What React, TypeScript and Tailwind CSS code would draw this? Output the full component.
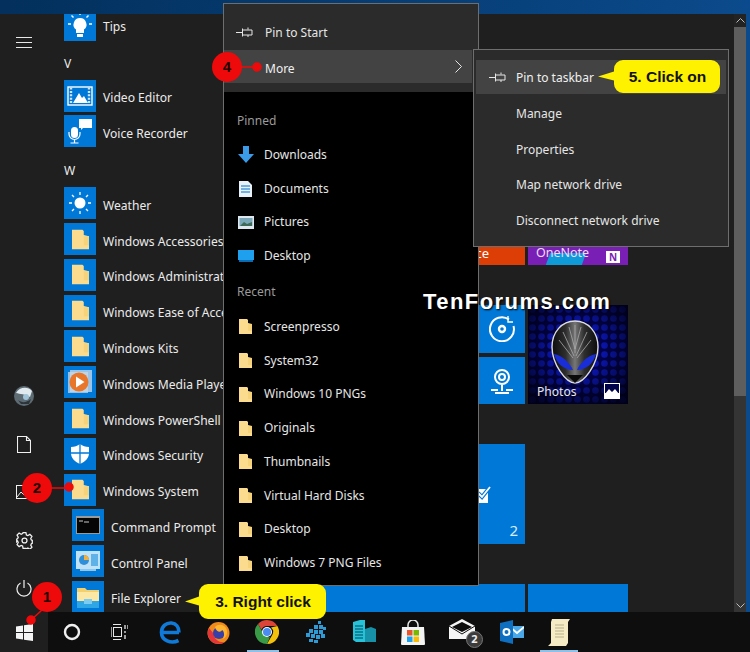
import React from "react";

const font = "font-['Noto_Sans',sans-serif]";

function Pin({ x = 0 }: { x?: number }) {
  return (
    <svg width="17" height="11" viewBox="0 0 17 11" fill="none" stroke="#e6e6e6" strokeWidth="1" style={{ marginLeft: x }}>
      <path d="M0 5.500h6M6.500 1.500v8M6.500 3h9.500v5H6.500M12 .5v2M12 8v2" />
    </svg>
  );
}

function Folder({ w = 13, h = 17 }: { w?: number; h?: number }) {
  return (
    <svg width={w} height={h} viewBox="0 0 13 17">
      <path d="M0 1h8l1 1v3l4 1v10H0z" fill="#fbdc8e" />
      <path d="M9 6l4 0v7H9z" fill="#f6d27a" />
    </svg>
  );
}

const VideoIcon = () => (
  <svg width="26" height="20" viewBox="0 0 26 20">
    <rect x="1" y="1" width="24" height="18" fill="none" stroke="#fff" strokeWidth="1.400" />
    <path d="M4 1.500v17M22 1.500v17" stroke="#cfe6f8" strokeWidth="2.400" strokeDasharray="2 1.400" />
    <path d="M6 17l6-10 3 5 2-2 4 7z" fill="#fff" />
  </svg>
);
const VoiceIcon = () => (
  <svg width="24" height="26" viewBox="0 0 24 26" fill="none">
    <path d="M11 1h13v9h-9l-2 2v-2h-2z" fill="#fff" />
    <rect x="3" y="9" width="7" height="11" rx="3.500" fill="#fff" />
    <path d="M1 14v2a5.500 5.500 0 0 0 11 0v-2M6.500 21.500v3M2.500 25h8" stroke="#fff" strokeWidth="1.200" />
  </svg>
);
const TipsIcon = () => (
  <svg width="24" height="26" viewBox="0 0 24 26" fill="none">
    <path d="M12 6a6.500 6.500 0 0 0-4 11.600V21h8v-3.400A6.500 6.500 0 0 0 12 6z" fill="#fff" />
    <rect x="9" y="22" width="6" height="3" fill="#fff" />
    <path d="M12 0v3M3.500 3.500l2 2M20.500 3.500l-2 2M0 12h3M21 12h3" stroke="#fff" strokeWidth="1.400" />
  </svg>
);
const SunIcon = () => (
  <svg width="22" height="22" viewBox="0 0 22 22">
    <circle cx="11" cy="11" r="5.500" fill="#fff" />
    <path d="M11 0v3M11 19v3M0 11h3M19 11h3M3 3l2 2M17 17l2 2M19 3l-2 2M5 17l-2 2" stroke="#fff" strokeWidth="1.300" />
  </svg>
);
const MediaIcon = () => (
  <svg width="26" height="26" viewBox="0 0 26 26">
    <rect x="3" y="1" width="22" height="22" fill="#9cc4e6" />
    <rect x="1" y="3" width="20" height="21" fill="#c8d8e6" opacity=".75" />
    <circle cx="12" cy="13" r="9.500" fill="#e8762b" />
    <path d="M9 7.500l8.500 5.500-8.500 5.500z" fill="#fff" />
  </svg>
);
const ShieldIcon = () => (
  <svg width="18" height="20" viewBox="0 0 18 20">
    <path d="M9 0c2.500 2 5.500 3 9 3v6c0 5-3.500 8.500-9 11C3.500 17.500 0 14 0 9V3c3.500 0 6.500-1 9-3z" fill="#fff" />
    <path d="M9 0v20M0 9h18" stroke="#0078d7" strokeWidth="1.300" />
  </svg>
);
const CmdIcon = () => (
  <svg width="24" height="18" viewBox="0 0 24 18">
    <rect width="24" height="18" fill="#9a9a9a" />
    <rect x="1" y="2" width="22" height="15" fill="#050505" />
    <path d="M3 5h4M8 6h5" stroke="#c9c9c9" strokeWidth="1" />
  </svg>
);
const PanelIcon = () => (
  <svg width="24" height="20" viewBox="0 0 24 20">
    <rect width="24" height="18" fill="#bfe2f6" />
    <circle cx="8" cy="9" r="5" fill="#2f8fd8" />
    <path d="M8 9V4a5 5 0 0 1 5 5z" fill="#f3b03d" />
    <rect x="15" y="3" width="7" height="12" fill="#5fb2e8" />
    <rect x="4" y="18" width="16" height="2" fill="#8fc6e8" />
  </svg>
);
const ExplorerIcon = () => (
  <svg width="24" height="22" viewBox="0 0 24 22">
    <path d="M1 2h8l2 2h12v18H1z" fill="#f4cf6d" />
    <path d="M1 6h22v16H1z" fill="#fde7a5" />
    <rect x="1" y="15" width="22" height="7" fill="#2ea6e6" />
    <rect x="8" y="13" width="8" height="5" fill="#7ccbf0" />
  </svg>
);
const FolderTile = () => <Folder w={17} h={23} />;

type Row = { label: string; icon: React.ReactNode; sub?: boolean };
const top: Row[] = [{ label: "Tips", icon: <TipsIcon /> }];
const v: Row[] = [
  { label: "Video Editor", icon: <VideoIcon /> },
  { label: "Voice Recorder", icon: <VoiceIcon /> },
];
const w: Row[] = [
  { label: "Weather", icon: <SunIcon /> },
  { label: "Windows Accessories", icon: <FolderTile /> },
  { label: "Windows Administrative Tools", icon: <FolderTile /> },
  { label: "Windows Ease of Access", icon: <FolderTile /> },
  { label: "Windows Kits", icon: <FolderTile /> },
  { label: "Windows Media Player", icon: <MediaIcon /> },
  { label: "Windows PowerShell", icon: <FolderTile /> },
  { label: "Windows Security", icon: <ShieldIcon /> },
  { label: "Windows System", icon: <FolderTile /> },
  { label: "Command Prompt", icon: <CmdIcon />, sub: true },
  { label: "Control Panel", icon: <PanelIcon />, sub: true },
  { label: "File Explorer", icon: <ExplorerIcon />, sub: true },
];

function AppRow({ r }: { r: Row }) {
  return (
    <div className={`h-[35.8px] shrink-0 flex items-center gap-[7px] whitespace-nowrap ${r.sub ? "pl-[8px]" : ""}`}>
      <div className="w-[32px] h-[32px] shrink-0 bg-[#0078d7] flex items-center justify-center">{r.icon}</div>
      <span className="pt-[5px] text-[12.1px] text-[#ececec]">{r.label}</span>
    </div>
  );
}

const Rail = () => (
  <div className="w-[48px] shrink-0 flex flex-col justify-between">
    <div className="h-[48px] mt-[4px] flex items-center justify-center">
      <svg width="16" height="11" viewBox="0 0 16 11" stroke="#e8e8e8" strokeWidth="1">
        <path d="M0 .5h16M0 5.500h16M0 10.500h16" />
      </svg>
    </div>
    <div className="flex flex-col">
      <div className="h-[48px] flex items-center justify-center">
        <svg width="22" height="22" viewBox="0 0 22 22">
          <circle cx="11" cy="11" r="10" fill="#5d6b73" />
          <path d="M3 8c3-6 12-7 16-2l-2 6c-5-3-10-3-14-4z" fill="#dfe9ee" />
          <path d="M5 15c4 3 8 3 13-1l-2 5H8z" fill="#2c343a" />
          <circle cx="13" cy="12" r="3" fill="#9fc2d6" />
        </svg>
      </div>
      <div className="h-[48px] flex items-center justify-center">
        <svg width="14" height="17" viewBox="0 0 14 17" fill="none" stroke="#f0f0f0" strokeWidth="1.100">
          <path d="M.5.500h9l4 4v12H.5zM9.500.500v4h4" />
        </svg>
      </div>
      <div className="h-[48px] flex items-center justify-center">
        <svg width="16" height="14" viewBox="0 0 16 14" fill="none" stroke="#f0f0f0" strokeWidth="1">
          <rect x=".5" y=".5" width="15" height="13" />
          <path d="M1 12l4-5 3 3 2-2 5 4" />
        </svg>
      </div>
      <div className="h-[48px] flex items-center justify-center">
        <svg width="17" height="17" viewBox="0 0 24 24" fill="none" stroke="#f0f0f0" strokeWidth="1.800">
          <circle cx="12" cy="12" r="3.500" />
          <path d="M10 1h4l.7 3.200 2 .9L19.600 3.400l2.900 2.900-1.700 2.900.9 2 1.300.7v4l-1.300.7-.9 2 1.700 2.900-2.900 2.900-2.900-1.700-2 .9L14 23h-4l-.7-3.200-2-.9-2.900 1.700-2.900-2.900 1.700-2.900-.9-2L1 14v-4l1.300-.7.9-2L1.500 4.400l2.900-2.900 2.900 1.700 2-.9z" />
        </svg>
      </div>
      <div className="h-[48px] flex items-center justify-center">
        <svg width="16" height="17" viewBox="0 0 16 17" fill="none" stroke="#f0f0f0" strokeWidth="1.200">
          <path d="M8 0v8M4.500 3A7 7 0 1 0 11.500 3" />
        </svg>
      </div>
    </div>
  </div>
);

const AppList = () => (
  <div className={`w-[175px] shrink-0 pl-[16px] -mt-[7px] flex flex-col ${font}`}>
    {top.map((r) => <AppRow key={r.label} r={r} />)}
    <div className="h-[35px] shrink-0 pt-[12px] text-[12.1px] text-[#ececec]">V</div>
    {v.map((r) => <AppRow key={r.label} r={r} />)}
    <div className="h-[36px] shrink-0 pt-[13px] text-[12.1px] text-[#ececec]">W</div>
    {w.map((r) => <AppRow key={r.label} r={r} />)}
  </div>
);

const Photos = () => (
  <div className="w-[100px] h-[99px] relative overflow-hidden">
    <svg width="100" height="99" viewBox="0 0 100 99" className="block">
      <defs>
        <pattern id="dots" width="9" height="9" patternUnits="userSpaceOnUse">
          <circle cx="4.500" cy="4.500" r="3.300" fill="#0a14a8" />
        </pattern>
        <radialGradient id="vig" cx=".5" cy=".45" r=".65">
          <stop offset=".4" stopColor="#000" stopOpacity="0" />
          <stop offset="1" stopColor="#000010" stopOpacity=".85" />
        </radialGradient>
        <linearGradient id="head" x1="0" y1="0" x2="1" y2="0">
          <stop offset="0" stopColor="#0c0c0c" />
          <stop offset=".3" stopColor="#2e2e2e" />
          <stop offset=".5" stopColor="#777" />
          <stop offset=".7" stopColor="#2e2e2e" />
          <stop offset="1" stopColor="#0c0c0c" />
        </linearGradient>
      </defs>
      <rect width="100" height="99" fill="#02024a" />
      <rect width="100" height="99" fill="url(#dots)" />
      <rect width="100" height="99" fill="url(#vig)" />
      <path d="M47 16c13 0 23 11 23 26 0 17-14 36-23 36S24 59 24 42c0-15 10-26 23-26z" fill="url(#head)" stroke="#dcdcdc" strokeWidth="1.400" />
      <path d="M47 20v28M41 22l6 22 6-22M35 27l11 24M59 27L48 51M31 35l14 18M63 35L49 53" fill="none" stroke="#a8a8a8" strokeWidth=".8" />
      <path d="M26 49c8 1 16 9 19 16-9 0-17-7-19-16zM68 49c-8 1-16 9-19 16 9 0 17-7 19-16z" fill="#1a2ed8" />
      <path d="M39 70h16l-8 8z" fill="#0a0a0a" />
    </svg>
    <span className={`absolute left-[9px] bottom-[3px] text-[12.1px] text-[#e8e8e8] ${font}`}>Photos</span>
    <svg width="16" height="16" viewBox="0 0 16 16" className="absolute right-[8px] bottom-[5px]">
      <rect width="16" height="16" fill="#fff" />
      <rect x="1" y="1" width="14" height="9" fill="#02024a" />
      <path d="M1 11l4-5 3 3 3-3 4 5v4H1z" fill="#fff" />
    </svg>
  </div>
);

const Tiles = () => (
  <div className="flex-1 overflow-hidden pl-[2px] pt-[151px] grid grid-cols-[300px_100px] gap-x-[3px] content-start">
    <div className="h-[100px] flex justify-end">
      <div className="w-[100px] h-[100px] bg-[#dc3e05] flex items-end justify-end pr-[36px] pb-[2px]">
        <span className={`text-[13px] text-white ${font}`}>Office</span>
      </div>
    </div>
    <div className="w-[100px] h-[100px] bg-[#7a1fb5] relative overflow-hidden">
      <div className="absolute left-[20px] bottom-0 w-[36px] h-[12px] bg-[#0f9bd8] -skew-x-[20deg]" />
      <span className={`absolute left-[8px] bottom-[2px] text-[12.5px] text-[#ecdcff] ${font}`}>OneNote</span>
      <span className={`absolute right-[8px] bottom-[2px] w-[14px] h-[12px] bg-white text-[#7a1fb5] text-[10px] font-bold leading-[12px] text-center ${font}`}>N</span>
    </div>

    <div className="mt-[40px] h-[99px] flex flex-col items-end justify-between">
      <div className="w-[47px] h-[48px] bg-[#0078d7] flex items-center justify-center">
        <svg width="26" height="26" viewBox="0 0 26 26" fill="none" stroke="#fff" strokeWidth="2">
          <path d="M20 3.500A12 12 0 1 0 24.500 10" />
          <circle cx="13" cy="13" r="3" strokeWidth="2.400" />
          <path d="M19 0v6h5" strokeWidth="1.400" />
        </svg>
      </div>
      <div className="w-[47px] h-[47px] bg-[#0078d7] flex items-center justify-center">
        <svg width="22" height="26" viewBox="0 0 22 26" fill="none" stroke="#fff" strokeWidth="2">
          <circle cx="11" cy="9" r="7" />
          <circle cx="11" cy="9" r="3" />
          <path d="M0 22h7M15 22h7M4 25h14M11 17v6" />
        </svg>
      </div>
    </div>
    <div className="mt-[40px]"><Photos /></div>

    <div className="mt-[40px] h-[100px] flex justify-end">
      <div className="w-[100px] h-[100px] bg-[#0078d7] relative">
        <svg width="16" height="18" viewBox="0 0 16 18" className="absolute left-[50px] top-[41px]">
          <rect y="4" width="13" height="14" fill="#fff" />
          <path d="M3 8l4 4 8-10" fill="none" stroke="#0078d7" strokeWidth="4" />
          <path d="M3 8l4 4 8-10" fill="none" stroke="#fff" strokeWidth="1.800" />
        </svg>
        <span className={`absolute right-[7px] bottom-[3px] text-[15px] text-[#d8ecfb] ${font}`}>2</span>
      </div>
    </div>
    <div className="mt-[40px]" />

    <div className="mt-[40px] h-[60px] bg-[#0078d7]" />
    <div className="mt-[40px] h-[60px] bg-[#0078d7]" />
  </div>
);

const Scrollbar = () => (
  <div className="w-[12px] shrink-0 bg-[#343434] flex flex-col">
    <div className="h-[13px] bg-[#232323] flex items-center justify-center">
      <svg width="9" height="5" viewBox="0 0 9 5" fill="none" stroke="#bdbdbd"><path d="M.5 4.500l4-4 4 4" /></svg>
    </div>
    <div className="h-[369px] bg-[#5e5e5e]" />
    <div className="flex-1" />
    <div className="h-[13px] flex items-center justify-center">
      <svg width="9" height="5" viewBox="0 0 9 5" fill="none" stroke="#bdbdbd"><path d="M.5.500l4 4 4-4" /></svg>
    </div>
  </div>
);

const blueArrow = (
  <svg width="16" height="17" viewBox="0 0 16 17"><path d="M5 0h6v8h5l-8 9-8-9h5z" fill="#3b9be8" /></svg>
);
const docIcon = (
  <svg width="13" height="16" viewBox="0 0 13 16">
    <path d="M0 0h9l4 4v12H0z" fill="#e8f1f8" />
    <path d="M2 5h9M2 8h9M2 11h9" stroke="#4a9bd8" strokeWidth="1.400" />
  </svg>
);
const picIcon = (
  <svg width="16" height="13" viewBox="0 0 16 13">
    <rect width="16" height="13" fill="#dfe8ee" />
    <rect x="1.500" y="2" width="13" height="8" fill="#7aa8b8" />
    <path d="M2 10l4-4 3 2 5-2v4z" fill="#3f6a58" />
  </svg>
);
const deskIcon = (
  <svg width="16" height="12" viewBox="0 0 16 12">
    <rect width="16" height="10" fill="#1ea0ee" />
    <rect x="1" y="10" width="14" height="2" fill="#0c6bb0" />
  </svg>
);

function MenuRow({ icon, label }: { icon: React.ReactNode; label: string }) {
  return (
    <div className="h-[33.75px] flex items-center">
      <div className="w-[40px] shrink-0 flex justify-center pl-[3px]">{icon}</div>
      <span className="text-[12px] text-[#e6e6e6]">{label}</span>
    </div>
  );
}

const ContextMenu = () => (
  <div className={`absolute left-[223px] top-[3px] w-[256px] h-[583px] border border-[#6e6e6e] bg-black flex flex-col ${font}`}>
    <div className="h-[88px] shrink-0 bg-[#2b2b2b] pt-[11px]">
      <div className="h-[35px] flex items-center text-[12px] text-[#e6e6e6]">
        <div className="w-[41px] flex justify-center"><Pin /></div>
        <span>Pin to Start</span>
      </div>
      <div className="h-[33px] flex items-center justify-between bg-[#434343] pl-[41px] pr-[9px] mr-[6px] text-[12px] text-[#f0f0f0]">
        <span className="pt-[5px]">More</span>
        <svg width="8" height="13" viewBox="0 0 8 13" fill="none" stroke="#e6e6e6"><path d="M.5.500l6 6-6 6" /></svg>
      </div>
    </div>
    <div className="h-[46px] shrink-0 flex items-end pb-[8px] pl-[13px] text-[12px] text-[#9b9b9b]">Pinned</div>
    <MenuRow icon={blueArrow} label="Downloads" />
    <MenuRow icon={docIcon} label="Documents" />
    <MenuRow icon={picIcon} label="Pictures" />
    <MenuRow icon={deskIcon} label="Desktop" />
    <div className="h-[37px] shrink-0 flex items-end pb-[9px] pl-[13px] text-[12px] text-[#9b9b9b]">Recent</div>
    {["Screenpresso", "System32", "Windows 10 PNGs", "Originals", "Thumbnails", "Virtual Hard Disks", "Desktop", "Windows 7 PNG Files"].map((l, i) => (
      <MenuRow key={i} icon={<Folder />} label={l} />
    ))}
  </div>
);

const SubMenu = () => (
  <div className={`absolute left-[473px] top-[49px] w-[256px] h-[198px] border border-[#6e6e6e] bg-[#2b2b2b] pt-[10px] flex flex-col ${font}`}>
    <div className="h-[34px] mx-[2px] bg-[#434343] flex items-center pl-[13px] text-[12px] text-[#f0f0f0]">
      <Pin /><span className="ml-[10px] pt-[2px]">Pin to taskbar</span>
    </div>
    <div className="mt-[2px] flex flex-col">
      {["Manage", "Properties", "Map network drive", "Disconnect network drive"].map((l) => (
        <div key={l} className="h-[35.75px] flex items-center pl-[42px] text-[12px] text-[#e6e6e6]">{l}</div>
      ))}
    </div>
  </div>
);

function Callout({ left, top, w, h, tail, label }: { left: number; top: number; w: number; h: number; tail: number; label: string }) {
  const b = tail;
  const m = h / 2;
  return (
    <div className="absolute" style={{ left, top, width: w, height: h }}>
      <svg width={w} height={h} viewBox={`0 0 ${w} ${h}`} className="absolute inset-0">
        <path
          d={`M${b + 8} 0H${w - 9}a9 9 0 0 1 9 9V${h - 9}a9 9 0 0 1-9 9H${b + 8}a9 9 0 0 1-9-9V${m + 4}L0 ${m}l${b - 1} -5V9a9 9 0 0 1 9-9z`}
          fill="#fef200"
        />
      </svg>
      <div className="absolute inset-y-0 right-0 flex items-center justify-center text-[15.5px] font-bold text-[#111] font-['Liberation_Sans',sans-serif]" style={{ left: b }}>
        {label}
      </div>
    </div>
  );
}

function Badge({ left, top, n }: { left: number; top: number; n: string }) {
  return (
    <div
      className="absolute w-[30px] h-[30px] rounded-full bg-[#ee0a0a] flex items-center justify-center text-[15px] font-bold text-[#200] font-['Liberation_Sans',sans-serif]"
      style={{ left, top }}
    >
      {n}
    </div>
  );
}

const Taskbar = () => (
  <div className="h-[40px] shrink-0 bg-[#0e0e0e] flex">
    <div className="w-[48px] shrink-0 bg-[#1f1f1f] flex items-center justify-center">
      <svg width="17" height="17" viewBox="0 0 17 17" fill="#f4f4f4">
        <path d="M0 2.500l7-1v6.500H0zM8 1.300L17 0v8H8zM0 9h7v6.500l-7-1zM8 9h9v8l-9-1.300z" />
      </svg>
    </div>
    <div className="w-[47px] flex items-center justify-center">
      <svg width="18" height="18" viewBox="0 0 18 18" fill="none"><circle cx="9" cy="9" r="7" stroke="#f0f0f0" strokeWidth="2.400" /></svg>
    </div>
    <div className="w-[48px] flex items-center justify-center">
      <svg width="17" height="16" viewBox="0 0 17 16" fill="none" stroke="#e8e8e8">
        <path d="M2 .5h8M2 15.500h8" /><rect x="2.500" y="3.500" width="8" height="9" /><path d="M0 3v10M14 1v4M17 1v4M14 7v2M14 11v4" strokeWidth="1.300" />
      </svg>
    </div>
    <div className="w-[54px] flex items-center justify-center">
      <svg width="22" height="23" viewBox="0 0 22 23" fill="none" stroke="#0f7ad8" strokeWidth="3.600">
        <path d="M20 11.500H4M19.500 19.500C12 23 2.500 19.500 2.500 11.500 2.500 5 7.500 1.500 12.500 2c4.500.5 7.500 4 7.500 9.500" />
      </svg>
    </div>
    <div className="w-[42px] flex items-center justify-center">
      <svg width="23" height="23" viewBox="0 0 23 23">
        <circle cx="11.500" cy="12" r="11" fill="#f08a1d" />
        <path d="M2 7a11 11 0 0 0 5 15c4 1.500 8 1 11-1-5 1-11-2-11-8z" fill="#e3353a" />
        <circle cx="12" cy="12" r="6" fill="#3a3fa8" />
        <path d="M8 6c3-3 8-3 11 1 2 4 1 9-3 11 2-4 1-8-1-9-1 3-6 2-7-3z" fill="#ffb62e" />
      </svg>
    </div>
    <div className="w-[56px] flex flex-col items-center relative">
      <div className="flex-1 flex items-center justify-center">
        <svg width="24" height="24" viewBox="0 0 24 24">
          <path d="M12 0a12 12 0 0 1 10.400 6H12a6 6 0 0 0-5.600 3.800L3 4a12 12 0 0 1 9-4z" fill="#db4437" />
          <path d="M22.400 6A12 12 0 0 1 12 24l5.200-9A6 6 0 0 0 16 7.500z" fill="#f4c20d" />
          <path d="M12 24A12 12 0 0 1 3 4l5 9a6 6 0 0 0 7 4z" fill="#3a9b47" />
          <circle cx="12" cy="12" r="5" fill="#fff" /><circle cx="12" cy="12" r="4" fill="#4a8cf0" />
        </svg>
      </div>
      <div className="absolute bottom-0 left-[8px] w-[32px] h-[2px] bg-[#8fc0e8]" />
    </div>
    <div className="w-[42px] flex items-center justify-center">
      <svg width="20" height="23" viewBox="0 0 20 23" fill="#2e9bd6">
        <rect x="12" y="0" width="3" height="3" /><rect x="8" y="4" width="4" height="4" /><rect x="13" y="4" width="4" height="4" />
        <rect x="3" y="8" width="4" height="4" /><rect x="8" y="9" width="4" height="4" /><rect x="13" y="9" width="4" height="4" /><rect x="17" y="6" width="3" height="3" />
        <rect x="0" y="12" width="4" height="4" /><rect x="5" y="13" width="4" height="4" /><rect x="10" y="14" width="4" height="4" /><rect x="15" y="13" width="4" height="4" />
        <rect x="3" y="18" width="4" height="3" /><rect x="8" y="19" width="4" height="3" />
      </svg>
    </div>
    <div className="w-[54px] flex items-center justify-center">
      <svg width="24" height="24" viewBox="0 0 24 24">
        <path d="M1 2l7-2h5v22H4L1 20z" fill="#27c2d8" />
        <path d="M13 9l6-2 5 2v13H13z" fill="#1691a8" />
        <path d="M3 6h8M3 9h8M3 12h8M3 15h8M3 18h8" stroke="#0e7186" strokeWidth="1.300" />
      </svg>
    </div>
    <div className="w-[44px] flex items-center justify-center">
      <svg width="24" height="25" viewBox="0 0 24 25">
        <path d="M7 8V5a5 5 0 0 1 10 0v3" fill="none" stroke="#e8e8e8" strokeWidth="1.500" />
        <path d="M1 7h22l1 17a1 1 0 0 1-1 1H1a1 1 0 0 1-1-1z" fill="#f4f4f4" />
        <rect x="6" y="10" width="5.500" height="5.500" fill="#e8542c" /><rect x="12.500" y="10" width="5.500" height="5.500" fill="#7ab800" />
        <rect x="6" y="16.500" width="5.500" height="5.500" fill="#1ea0ee" /><rect x="12.500" y="16.500" width="5.500" height="5.500" fill="#fbbc09" />
      </svg>
    </div>
    <div className="w-[62px] flex items-center justify-center">
      <div className="relative w-[34px] h-[32px]">
        <svg width="26" height="20" viewBox="0 0 26 20" className="absolute left-0 top-[3px]">
          <path d="M0 7L13 0l13 7v13H0z" fill="#f6f6f6" />
          <path d="M3 8l10-5 10 5-10 5z" fill="#0e0e0e" />
          <path d="M0 7l13 8 13-8" fill="none" stroke="#0e0e0e" />
        </svg>
        <div className={`absolute right-0 bottom-0 w-[17px] h-[17px] rounded-full bg-[#3c3c3c] border border-[#777] flex items-center justify-center text-[11px] font-bold text-[#eee] ${font}`}>2</div>
      </div>
    </div>
    <div className="w-[30px] flex items-center justify-center">
      <svg width="24" height="24" viewBox="0 0 24 24">
        <rect x="9" y="6" width="15" height="12" fill="#4aa8e8" />
        <path d="M10 7l7 6 7-6" fill="none" stroke="#fff" strokeWidth="1.800" />
        <path d="M0 3l13-3v24L0 21z" fill="#0e6fc0" />
        <circle cx="6.500" cy="12" r="3" fill="none" stroke="#fff" strokeWidth="2" />
      </svg>
    </div>
    <div className="w-[64px] flex flex-col items-center relative">
      <div className="flex-1 flex items-center justify-center">
        <svg width="22" height="27" viewBox="0 0 22 27">
          <path d="M4 0h18l-2 3v21l-2 3H0l3-3V3z" fill="#f5ecc6" />
          <path d="M7 6h9M7 9h9M7 12h9M7 15h9M7 18h9" stroke="#b8ae8c" />
        </svg>
      </div>
      <div className="absolute bottom-0 left-[13px] w-[38px] h-[2px] bg-[#8fc0e8]" />
    </div>
  </div>
);

export default function App() {
  return (
    <div className="relative w-[750px] h-[652px] overflow-hidden bg-[#1f1f1f] flex flex-col">
      <div className="h-[14px] shrink-0 bg-gradient-to-r from-[#03305c] to-[#0b4a8c]" />
      <div className="h-[598px] shrink-0 flex">
        <div className="w-[746px] shrink-0 flex overflow-hidden">
          <Rail />
          <AppList />
          <Tiles />
          <Scrollbar />
        </div>
        <div className="flex-1 bg-[#0b4a8c]" />
      </div>
      <Taskbar />

      <ContextMenu />
      <SubMenu />

      <div className="absolute left-[423px] top-[285px] text-[22px] font-bold tracking-[1.45px] text-white font-['Liberation_Sans',sans-serif] [text-shadow:1px_1px_2px_#000]">
        TenForums.com
      </div>

      <Callout left={185} top={584} w={141} h={35} tail={15} label="3. Right click" />
      <Callout left={598} top={60} w={122} h={33} tail={17} label="5. Click on" />

      <svg width="750" height="652" viewBox="0 0 750 652" className="absolute inset-0 pointer-events-none">
        <g stroke="#ee0a0a" strokeWidth="1.500" fill="#ee0a0a">
          <path d="M42 610L31 620" />
          <circle cx="31" cy="620" r="4" />
          <path d="M50 488H69" />
          <circle cx="69" cy="487" r="4" />
          <path d="M238 67H257" />
          <circle cx="257" cy="67" r="4" />
        </g>
      </svg>
      <Badge left={32} top={582} n="1" />
      <Badge left={22} top={473} n="2" />
      <Badge left={212} top={52} n="4" />
    </div>
  );
}
